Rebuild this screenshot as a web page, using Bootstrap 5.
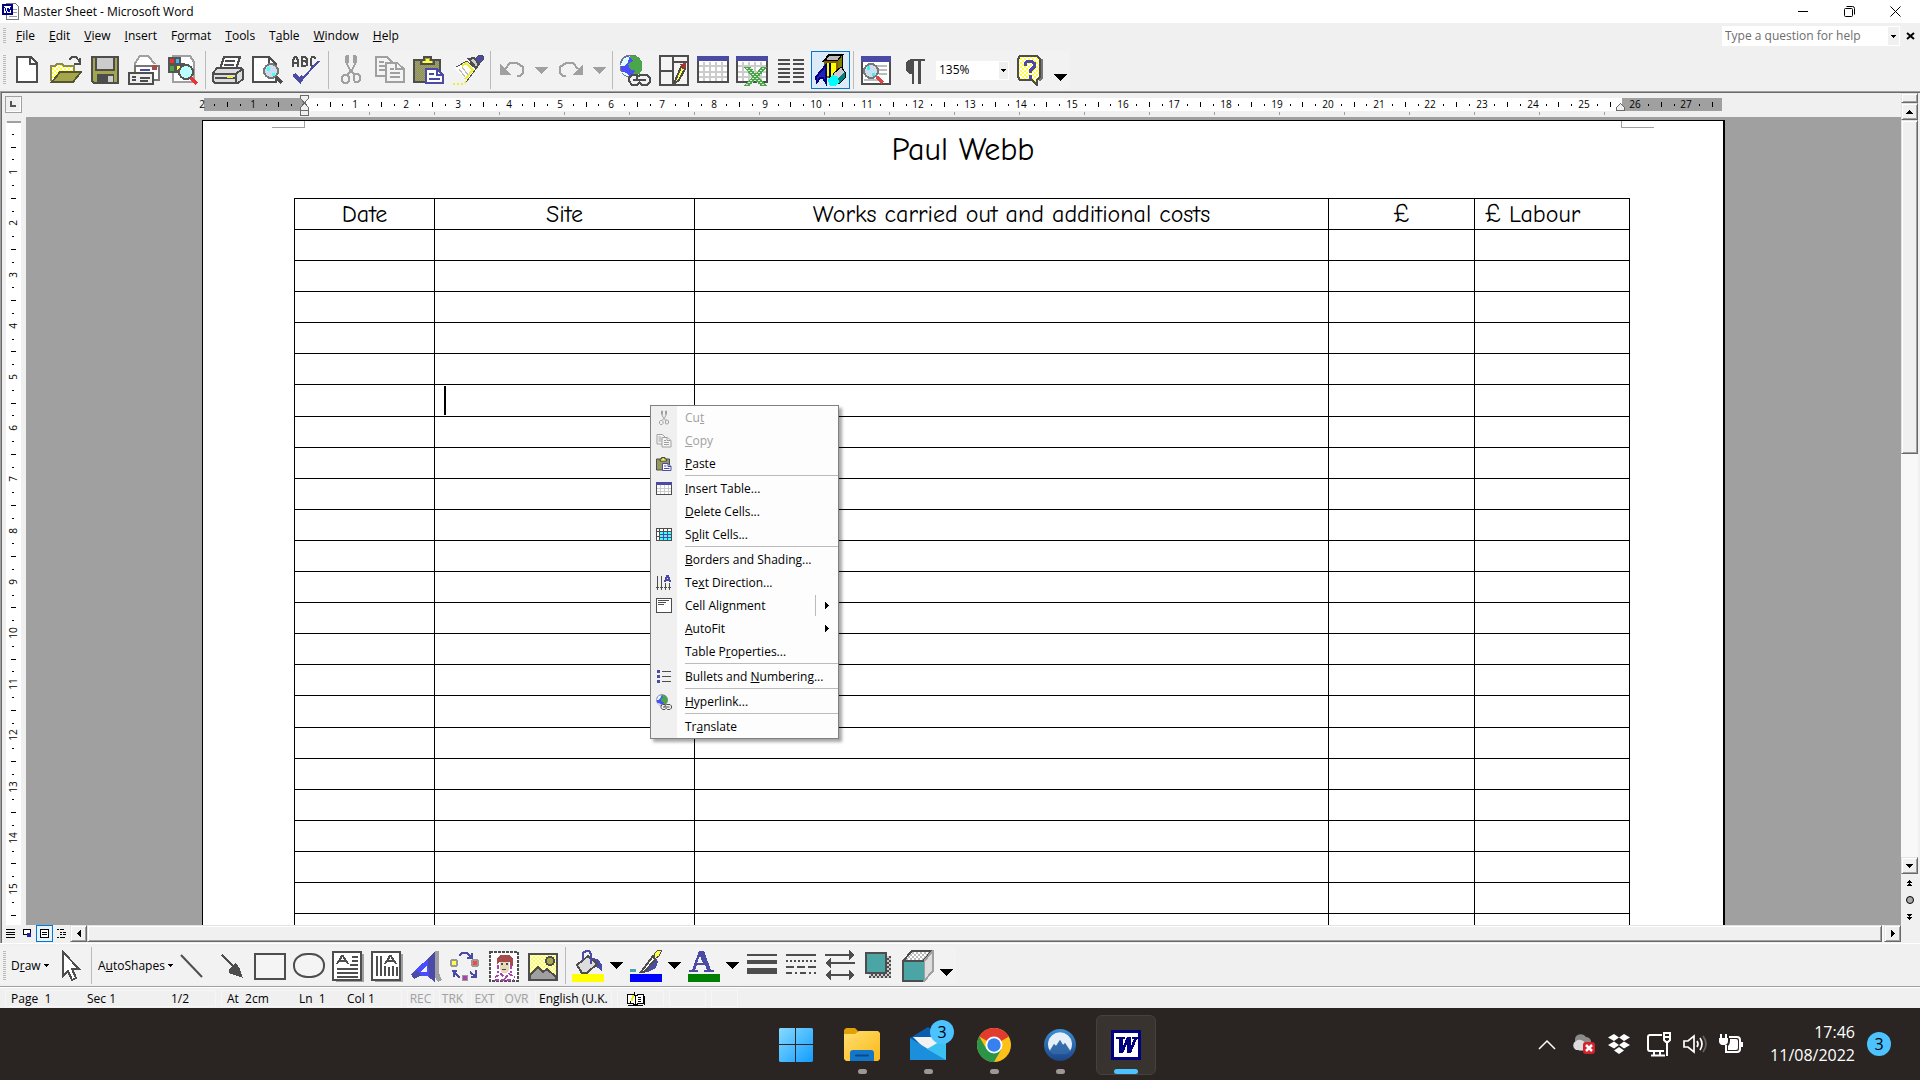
<!DOCTYPE html>
<html lang="en">
<head>
<meta charset="utf-8">
<meta name="viewport" content="width=device-width, initial-scale=1">
<title>Master Sheet - Microsoft Word</title>
<link href="https://cdn.jsdelivr.net/npm/bootstrap@5.3.0/dist/css/bootstrap.min.css" rel="stylesheet">
<style>
:root{--face:#f0f0f0;--mid:#a0a0a0;--dark:#696969;--ink:#4d4d4d;--blue:#4b4ba5}
body{font-family:"Segoe UI","Open Sans",sans-serif;font-size:12px;line-height:16px;color:#000;background:var(--face);overflow:hidden}
button{border:0;background:none;padding:0;color:inherit;font:inherit;line-height:inherit}
svg{display:block;flex:none}
.px{shape-rendering:crispEdges}
.titlebar{height:23px;background:#fff;padding-left:2px;padding-right:2px}
.titlebar .caption{width:46px;height:20px;display:grid;place-items:center}
.menubar{height:26px}
.menubar .entry{padding:0 7px;color:#000;text-decoration:none}
.grip{width:3px;background:repeating-linear-gradient(#bbb 0 1px,var(--face) 1px 2px);margin:0 1px 0 3px}
.menubar .grip{height:16px;margin-right:3px}
.ask{width:178px;height:20px;background:#fff;padding:1px}
.ask input{border:0;outline:0;background:none;padding:0 2px;min-width:0;color:#6d6d6d}
.ask input::placeholder{color:#6d6d6d;opacity:1}
.ask button{width:11px;background:var(--face);display:grid;place-items:center}
.doc-close{width:20px;display:grid;place-items:center}
.toolrow{height:42px;padding:2px 0}
.drawrow{height:43px;padding:3px 0 2px;border-top:1px solid #fff}
.strip{background:#f2f2f2;border-radius:2px}
.tool{width:39px;display:grid;place-items:center;flex:none}
.tool.pressed{border:1px solid #0078d7;background:#dcebf7;margin-left:1px}
.drop{width:19px;display:grid;place-items:center;flex:none}
.word-btn{display:flex;align-items:center;gap:3px;padding:0 0 0 4px}
.btn-draw{width:45px}
.btn-shapes{width:78px}
.rule{width:1px;background:#bbb;margin:0 2px 0 3px;flex:none}
.zoombox{position:relative;width:73px;height:19px;background:#fff;margin:0 3px 0 2px}
.zoombox select{appearance:none;border:1px solid #fff;border-right-width:2px;background:#fff;width:100%;height:19px;padding:0 0 0 2px;font-size:12px;line-height:16px;color:#000;border-radius:0}
.zoombox .knob{position:absolute;right:1px;top:1px;width:9px;height:17px;background:var(--face);display:grid;place-items:center;pointer-events:none}
.desk{flex:1 1 0;border-top:1px solid var(--mid);border-left:1px solid var(--mid);min-height:0}
.desk-inner{border-top:1px solid var(--dark);border-left:1px solid var(--dark);min-height:0;min-width:0}
.hrule{height:24px}
.tabstop{width:17px;height:17px;border:1px solid var(--mid);margin:3px 4px 0 3px;display:grid;place-items:center;box-shadow:inset -1px -1px #fff}
.vrule{width:24px;overflow:hidden}
.work{background:var(--mid);padding-top:3px;overflow:hidden;min-height:0}
.sheet{position:relative;width:1523px;height:1100px;background:#fff;border:1px solid #000;border-right-width:2px;flex:none}
.crop-mark{position:absolute;top:0;width:33px;height:7px;border-bottom:1px solid var(--mid)}
.crop-mark.start{left:69px;border-right:1px solid var(--mid)}
.crop-mark.end{right:69px;border-left:1px solid var(--mid)}
.hand{font-family:"Comic Sans MS","Comic Neue",Lato,sans-serif;font-weight:400}
.sheet h1{font-size:32px;line-height:40px;margin:0;padding:9px 0 28px}
.log{width:1335px;margin-left:91px;border-collapse:collapse;table-layout:fixed;font-size:24px;line-height:28px}
.log th,.log td{border:1px solid #000;padding:0 10px;height:31px;font-weight:400;text-align:center}
.log th:last-child{text-align:left}
.log tr:nth-child(10n+6) td{height:32px}
.log td{position:relative}
.caret{position:absolute;left:9px;top:1px;width:2px;height:29px;background:#000}
.bevel{background:var(--face);border:1px solid;border-color:#e3e3e3 var(--dark) var(--dark) #e3e3e3;box-shadow:inset 1px 1px #fff,inset -1px -1px var(--mid);display:grid;place-items:center;flex:none}
.track{background:#f8f8f8}
.vbar{width:17px;margin-right:2px;padding-bottom:18px}
.vbar .bevel{width:17px}
.hbar{height:17px;margin-bottom:1px}
.view{width:17px;height:17px;display:grid;place-items:center}
.view.pressed{border:1px solid #0078d7;background:#e5f1fb}
.ctx{position:absolute;left:447px;top:284px;width:189px;border:1px solid #808080;background:linear-gradient(90deg,var(--face) 26px,#fdfdfd 26px);box-shadow:3px 3px 3px rgba(0,0,0,.35);z-index:2}
.ctx button{display:flex;align-items:center;width:100%;height:23px;text-align:left}
.ctx .pic{width:26px;display:grid;place-items:center;flex:none;margin-right:8px}
.ctx .off{color:var(--mid)}
.ctx hr{margin:0 0 1px 34px;border:0;height:1px;background:#bbb;opacity:1}
.ctx .more{margin-left:auto;width:23px;height:21px;display:grid;place-items:center}
.ctx .split{border-left:1px solid #bbb}
.status{height:22px;border-top:1px solid var(--mid);box-shadow:inset 0 1px #fff;padding:3px 0 1px 5px;gap:5px;font-family:Tahoma,"Open Sans",sans-serif}
.pane{border:1px solid #f6f6f6;display:flex;align-items:center;padding-left:5px;white-space:nowrap}
.pane-page{width:211px}.pane-at{width:181px}.pane-flag{width:27px;padding:0;justify-content:center;color:var(--mid)}
.pane-lang{width:77px;padding-left:3px}.pane-book{width:47px}.pane-a{width:37px}.pane-b{width:27px}
.c76{width:76px}.c84{width:84px}.c72{width:72px}.c48{width:48px}
.taskbar{height:72px;background:#2a2522;display:grid;grid-template-columns:1fr auto 1fr;color:#fff}
.dock{padding-left:2px}
.app{width:66px;height:72px;padding-top:2px;position:relative;display:grid;place-items:center}
.app::after{content:"";position:absolute;bottom:6px;left:29px;width:9px;height:5px;border-radius:3px;background:#9b9896}
.app.start::after{display:none}
.app.active::before{content:"";position:absolute;left:3px;top:7px;width:60px;height:60px;border-radius:6px;background:#38332f;border:1px solid #46413d}
.app.active::after{left:21px;width:24px;background:#4cc2ff}
.app svg{position:relative}
.count{width:24px;height:24px;border-radius:50%;background:#4cc2ff;color:#000;font-size:16px;line-height:24px;text-align:center}
.app .count{position:absolute;left:35px;top:12px}
.trayicon{width:36px;display:grid;place-items:center}
.clock{width:86px;font-size:16px;line-height:23px;text-align:right;white-space:nowrap;display:flex;flex-direction:column;align-items:flex-end}
</style>
</head>
<body class="d-flex flex-column vh-100">

<svg width="0" height="0" class="position-absolute" aria-hidden="true">
<defs>
<pattern id="chk-y" width="4" height="4" patternUnits="userSpaceOnUse"><path fill="#fff" d="M0 0h4v4H0z"/><path fill="#ff4" d="M0 0h2v2H0zM2 2h2v2H2z"/></pattern>
<pattern id="chk-o" width="2" height="2" patternUnits="userSpaceOnUse"><path fill="#a5a54b" d="M0 0h2v2H0z"/><path fill="#8a8a78" d="M0 0h1v1H0zM1 1h1v1H1z"/></pattern>
<pattern id="chk-g" width="4" height="4" patternUnits="userSpaceOnUse"><path fill="#fff" d="M0 0h4v4H0z"/><path fill="#bbb" d="M0 0h2v2H0zM2 2h2v2H2z"/></pattern>
<pattern id="chk-k" width="4" height="4" patternUnits="userSpaceOnUse"><path fill="#ccc" d="M0 0h4v4H0z"/><path fill="#4d4d4d" d="M0 0h2v2H0zM2 2h2v2H2z"/></pattern>
<pattern id="chk-e" width="4" height="4" patternUnits="userSpaceOnUse"><path fill="#4ba54b" d="M0 0h4v4H0z"/><path fill="#d5ecd5" d="M0 0h2v1H0zM2 2h2v1H2z"/></pattern>
</defs>
<symbol id="cut" viewBox="0 0 32 32"><g fill="none" stroke="#a0a0a0" stroke-width="2"><path d="M11 2v6l4 8 5 5M21 2v6l-4 8-5 5M11 2h2v7M21 2h-2v7"/><path d="M9 21h3l2 2v4l-2 2H9l-2-2v-4zM20 20h3l2 2v4l-2 2h-3l-1-2v-4z"/></g></symbol>
<symbol id="copy" viewBox="0 0 32 32"><g fill="#f4f4f4" stroke="#a0a0a0" stroke-width="2"><path d="M2 3h11l5 5v14H2z"/><path d="M5 8h5M5 12h8M5 16h6"/><path d="M12 9h11l7 6v13H12z"/><path d="M22 9v6h7M16 15h4M16 19h10M16 23h10"/></g></symbol>
<symbol id="paste" viewBox="0 0 32 32"><path fill="url(#chk-o)" stroke="#4d4d4d" stroke-width="2" d="M1 6h26v22H1z"/><path fill="#a5a54b" stroke="#4d4d4d" stroke-width="2" d="M8 10V6h3V3h7v3h3v4z"/><path fill="#ff4" d="M10 9h9V7h-3V5h-3v2h-3z"/><path fill="#fff" stroke="#4b4ba5" stroke-width="2" d="M13 15h11l6 6v8H13z"/><path fill="none" stroke="#4b4ba5" stroke-width="2" d="M24 15v6h6M16 20h5M16 25h11"/></symbol>
<symbol id="grid" viewBox="0 0 32 32"><path fill="#fff" stroke="#4d4d4d" stroke-width="2" d="M1 3h30v25H1z"/><path fill="#4b4ba5" d="M0 2h32v5H0z"/><path fill="none" stroke="#ccc" stroke-width="2" d="M7 8v19M13 8v19M19 8v19M25 8v19M2 12h28M2 18h28M2 23h28"/></symbol>
<symbol id="globe" viewBox="0 0 32 32"><circle cx="12" cy="12" r="11" fill="#4b4bff" stroke="#777"/><path fill="#4ba54b" d="M10 2h7l6 6v8l-4 6h-6l3-5-5-2-2-5 5-3z"/><path fill="#dff" d="M5 4l6-2-2 6-4 4-4 0zM3 18l5 1 3 4-6-2z"/><path fill="#f2f2f2" d="M11 21l2-1h15l3 3v6l-3 2H13l-3-3z"/><path fill="none" stroke="#4d4d4d" stroke-width="2" d="M19 21h-6l-3 3v3l3 4h5l3-3M18 26v-3l3-2h7l3 3v4l-3 3h-5l-2-2M14 26h13"/></symbol>
<symbol id="dn" viewBox="0 0 13 7"><path d="M0 0h13v1h-1v1h-1v1h-1v1H9v1H8v1H7v1H6V6H5V5H4V4H3V3H2V2H1V1H0z"/></symbol>
<symbol id="tiny" viewBox="0 0 5 3"><path d="M0 0h5v1H4v1H3v1H2V2H1V1H0z"/></symbol>
</svg>

<header class="titlebar d-flex align-items-center flex-shrink-0">
  <svg class="px me-1" width="17" height="17"><path fill="#fff" stroke="#777" d="M4.500 .5h9l3 3v13h-12z"/><path stroke="#999" d="M11 6.500h4M11 9.500h4M7 13.500h8"/><path fill="#fff" stroke="#00007f" stroke-width="2" d="M1 2h9v9H1z"/><path fill="none" stroke="#0000a0" stroke-width="1" d="M2.500 4l2 5 1.500-4 1 4 2-5"/></svg>
  <span>Master Sheet - Microsoft Word</span>
  <div class="d-flex ms-auto">
    <button class="caption" aria-label="Minimize"><svg class="px" width="10" height="10"><path d="M0 4h10v1H0z"/></svg></button>
    <button class="caption" aria-label="Restore"><svg width="11" height="11" fill="none" stroke="#000"><rect x=".5" y="2.500" width="8" height="8" rx="1"/><path d="M2.500 .5h6a2 2 0 0 1 2 2v6"/></svg></button>
    <button class="caption" aria-label="Close"><svg width="11" height="11" stroke="#000"><path d="M.5 .5l10 10M10.500 .5l-10 10"/></svg></button>
  </div>
</header>

<nav class="menubar d-flex align-items-center flex-shrink-0">
  <span class="grip"></span>
  <a class="entry" href="#"><u>F</u>ile</a><a class="entry" href="#"><u>E</u>dit</a><a class="entry" href="#"><u>V</u>iew</a><a class="entry" href="#"><u>I</u>nsert</a><a class="entry" href="#">F<u>o</u>rmat</a><a class="entry" href="#"><u>T</u>ools</a><a class="entry" href="#">T<u>a</u>ble</a><a class="entry" href="#"><u>W</u>indow</a><a class="entry" href="#"><u>H</u>elp</a>
  <div class="ask d-flex ms-auto"><input class="flex-grow-1" type="text" aria-label="Help search" placeholder="Type a question for help"><button aria-label="Recent questions"><svg class="px" width="5" height="3"><use href="#tiny"/></svg></button></div>
  <button class="doc-close" aria-label="Close document"><svg width="9" height="8" stroke="#000" stroke-width="2"><path d="M1 1l7 6M8 1L1 7"/></svg></button>
</nav>

<div class="toolrow d-flex flex-shrink-0">
 <div class="strip d-flex">
  <span class="grip my-1"></span>
  <button class="tool" aria-label="New"><svg class="px" width="32" height="32"><path fill="#fff" stroke="#4d4d4d" stroke-width="2" d="M6 3h14l6 6v19H6z"/><path fill="none" stroke="#4d4d4d" stroke-width="2" d="M19 3v7h7"/></svg></button>
  <button class="tool" aria-label="Open"><svg class="px" width="32" height="32"><path fill="none" stroke="#4d4d4d" stroke-width="2" d="M19 6l3-3h4l4 5M30 4v6h-6"/><path fill="url(#chk-y)" stroke="#8a8a50" stroke-width="2" d="M1 27V12h4l2-2h5l2 2h10v6"/><path fill="#a5a54b" stroke="#55552d" stroke-width="2" d="M2 28l8-10h21l-8 10z"/></svg></button>
  <button class="tool" aria-label="Save"><svg class="px" width="32" height="32"><path fill="#a5a54b" stroke="#4d4d4d" stroke-width="2" d="M3 3h26v26H5l-2-2z"/><path fill="#ccc" stroke="#4d4d4d" stroke-width="2" d="M7 3h18v13H7z"/><path fill="#4d4d4d" d="M8 20h17v9H8z"/><path fill="#ccc" d="M19 22h5v6h-5z"/></svg></button>
  <button class="tool" aria-label="E-mail"><svg class="px" width="32" height="32"><path fill="#fff" stroke="#a0a0a0" stroke-width="2" d="M7 15V9l5-7h8l7 8"/><path fill="#fff" stroke="#777" stroke-width="2" d="M7 12h24v14H7z"/><path fill="#a54b4b" d="M24 11h5v5h-5z"/><path stroke="#4b4ba5" stroke-width="2" d="M12 16h10"/><path fill="#eee" stroke="#4d4d4d" stroke-width="2" d="M1 19h24v11H1z"/><path stroke="#4d4d4d" stroke-width="2" d="M4 23h4M4 26h4M12 24h10M12 27h8"/></svg></button>
  <button class="tool" aria-label="File search"><svg class="px" width="32" height="32"><path fill="#fff" stroke="#a0a0a0" stroke-width="2" d="M6 2h17l4 6v20H6z"/><path fill="#555" d="M1 3h13v6h4v10H1z"/><path fill="#e33" d="M3 5h4v4H3z"/><path fill="#4bf" d="M9 5h3v4H9z"/><path fill="#4ba54b" d="M3 12h4v5H3z"/><path fill="#ff4" d="M10 12h3v4h-3z"/><circle cx="19" cy="18" r="7" fill="#bff" stroke="#555" stroke-width="2"/><path d="M24 24l6 6" stroke="#e33" stroke-width="4"/></svg></button>
  <span class="rule"></span>
  <button class="tool" aria-label="Print"><svg class="px" width="32" height="32"><path fill="#fff" stroke="#4d4d4d" stroke-width="2" d="M8 15l4-12h16l-4 12"/><path stroke="#4d4d4d" stroke-width="2" d="M13 7h10M12 11h10"/><path fill="#ddd" stroke="#4d4d4d" stroke-width="2" d="M5 14h24l2 2v9l-5 4H3l-2-2v-8z"/><path fill="none" stroke="#4d4d4d" stroke-width="2" d="M1 20h23l6-5M24 20v9M3 24h20"/><path stroke="#ee4" stroke-width="2" d="M15 23h6"/></svg></button>
  <button class="tool" aria-label="Print preview"><svg class="px" width="32" height="32"><path fill="#fff" stroke="#4d4d4d" stroke-width="2" d="M2 3h16l7 7v18H2z"/><path fill="none" stroke="#4d4d4d" stroke-width="2" d="M18 3v7h7"/><circle cx="20" cy="17" r="7" fill="#cde" stroke="#777" stroke-width="2"/><path fill="#4ff" d="M16 13h3v4h-3zM21 19h3v3h-3z"/><path d="M25 23l6 6" stroke="#4d4d4d" stroke-width="4"/></svg></button>
  <button class="tool" aria-label="Spelling"><svg class="px" width="32" height="32"><path fill="none" stroke="#4d4d4d" stroke-width="2" d="M3 13V6l2-3h1l2 3v7M3 9h5M12 13V3h3l2 2v2h-5M15 8h2v3l-2 1h-3M26 5l-2-2h-2l-1 2v6l1 1h2l2-1"/><path fill="none" stroke="#4b4ba5" stroke-width="4" d="M4 20l6 7 3-5"/><path stroke="#4b4ba5" stroke-width="2" fill="none" d="M11 26L29 7"/></svg></button>
  <span class="rule"></span>
  <button class="tool" aria-label="Cut" disabled><svg class="px" width="32" height="32"><use href="#cut"/></svg></button>
  <button class="tool" aria-label="Copy" disabled><svg class="px" width="32" height="32"><use href="#copy"/></svg></button>
  <button class="tool" aria-label="Paste"><svg class="px" width="32" height="32"><use href="#paste"/></svg></button>
  <button class="tool" aria-label="Format painter"><svg class="px" width="32" height="32"><path fill="#4b4ba5" stroke="#4d4d4d" d="M23 5l4-4 4 1v4l-5 5z"/><path fill="#ccc" stroke="#4d4d4d" stroke-width="2" d="M17 5l5-1 5 6-3 4z"/><path fill="#fff" d="M14 8l10 8-9 11L3 14z"/><path fill="none" stroke="#4d4d4d" stroke-width="1" d="M4 13L15 7l9 8-10 13"/><path fill="none" stroke="#bbb" d="M7 15l6 8M10 13l6 8"/><path fill="none" stroke="#ee3" stroke-width="2" d="M14 9l7 7-8 9M14 9l-4 3"/><path fill="none" stroke="#ee3" stroke-dasharray="2 2" stroke-width="2" d="M1 30h10l3-2"/></svg></button>
  <span class="rule"></span>
  <button class="tool" aria-label="Undo" disabled><svg class="px" width="32" height="32"><path fill="#a0a0a0" d="M3 10v11h11z"/><path fill="none" stroke="#a0a0a0" stroke-width="2" d="M8 15l5-6h7l6 4v6l-3 3h-3"/></svg></button>
  <button class="drop" aria-label="Undo list" disabled><svg class="px" width="13" height="7" fill="#a0a0a0"><use href="#dn"/></svg></button>
  <button class="tool" aria-label="Redo" disabled><svg class="px" width="32" height="32"><path fill="#a0a0a0" d="M28 10v11H17z"/><path fill="none" stroke="#a0a0a0" stroke-width="2" d="M23 15l-5-6h-7l-6 4v6l3 3h3"/></svg></button>
  <button class="drop" aria-label="Redo list" disabled><svg class="px" width="13" height="7" fill="#a0a0a0"><use href="#dn"/></svg></button>
  <span class="rule"></span>
  <button class="tool" aria-label="Insert hyperlink"><svg class="px" width="32" height="32"><use href="#globe"/></svg></button>
  <button class="tool" aria-label="Tables and borders"><svg class="px" width="32" height="32"><path fill="#f4f4f4" stroke="#4d4d4d" stroke-width="2" d="M2 2h28v29H2zM15 2v29M2 17h13M15 8h15"/><path fill="#ff4" stroke="#4d4d4d" stroke-width="2" d="M17 27l6-14 4 2-6 11-4 3z"/><path fill="#a33" d="M22 10l6-1v5l-2 1z"/></svg></button>
  <button class="tool" aria-label="Insert table"><svg class="px" width="32" height="32"><use href="#grid"/></svg></button>
  <button class="tool" aria-label="Insert worksheet"><svg class="px" width="32" height="32"><use href="#grid"/><path fill="url(#chk-e)" d="M8 13h7l5 7 5-7h6l-8 10 8 9h-7l-5-6-5 6H7l9-9z"/></svg></button>
  <button class="tool" aria-label="Columns"><svg class="px" width="32" height="32"><path stroke="#4d4d4d" stroke-width="2" d="M3 6h12M3 10h12M3 15h12M3 19h12M3 23h12M3 28h12M18 6h11M18 10h11M18 15h11M18 19h11M18 23h11M18 28h11"/></svg></button>
  <button class="tool pressed" aria-label="Drawing"><svg class="px" width="32" height="32"><path fill="#bbb" stroke="#000" stroke-width="2" d="M9 7l5-6h13l-4 6z"/><path fill="#808000" stroke="#000" d="M22 7l5-6v16l-5 6z"/><path fill="#ff0" stroke="#806000" stroke-width="2" d="M10 8h12v15H10z"/><path stroke="#000" stroke-width="2" d="M15 9v15"/><path fill="#22b" stroke="#000080" stroke-width="2" d="M1 23l10-12v18l-3-5H5l-3 4z"/><path fill="#ccc" stroke="#000" d="M18 20l8-7 4 5v6l-6 6z"/><path fill="#008080" d="M23 24l7-6v5l-6 7z"/><path fill="#0ff" d="M13 26l4-5 6 2 1 6-4 3h-5z"/></svg></button>
  <span class="rule"></span>
  <button class="tool" aria-label="Document map"><svg class="px" width="32" height="32"><path fill="#fff" stroke="#4d4d4d" stroke-width="2" d="M2 3h28v27H2z"/><path fill="#4b4ba5" d="M1 2h30v6H1z"/><path stroke="#bbb" stroke-width="2" d="M15 12h12M19 16h8M19 20h8M4 26h16"/><circle cx="11" cy="17" r="7" fill="#cde" stroke="#777" stroke-width="2"/><path fill="#4ee" d="M7 12h3v4H7zM12 19h3v3h-3z"/><path d="M17 23l6 6" stroke="#d44" stroke-width="4"/></svg></button>
  <button class="tool" aria-label="Show formatting marks"><svg class="px" width="32" height="32"><path fill="#4d4d4d" d="M12 5h14v2h-4v23h-3V7h-4v23h-2V20h-3l-3-3V9l2-3z"/></svg></button>
  <div class="zoombox align-self-center"><select aria-label="Zoom"><option>135%</option></select><span class="knob"><svg class="px" width="5" height="3"><use href="#tiny"/></svg></span></div>
  <button class="tool" aria-label="Help"><svg class="px" width="32" height="32"><path fill="url(#chk-y)" stroke="#4d4d4d" stroke-width="2" d="M4 2h17l3 3v18l-3 3v5l-5-5H4l-2-3V5z"/><path stroke="#777" stroke-width="2" fill="none" d="M26 5v19l-3 3"/><path fill="none" stroke="#4b4ba5" stroke-width="3" d="M9 12V9l3-2h3l3 2v4l-4 4v2M14 21v4"/></svg></button>
  <button class="drop align-items-end pb-1" aria-label="Toolbar options"><svg class="px mb-1" width="13" height="7"><use href="#dn"/></svg></button>
 </div>
</div>

<main class="desk d-flex">
 <div class="desk-inner d-flex flex-grow-1">
  <div class="d-flex flex-column flex-grow-1" style="min-width:0">
   <div class="hrule d-flex flex-shrink-0">
    <button class="tabstop" aria-label="Tab stop type"><svg class="px" width="7" height="7"><path fill="#555" d="M0 0h2v4h4v2H0z"/></svg></button>
    <div class="flex-grow-1 d-flex justify-content-center"><svg id="hruler" class="px overflow-visible" width="1523" height="24" font-family="Tahoma,'Open Sans',sans-serif" font-size="10" text-anchor="middle"></svg></div>
   </div>
   <div class="d-flex flex-grow-1" style="min-height:0">
    <div class="vrule"><svg id="vruler" class="px" width="24" height="808" font-family="Tahoma,'Open Sans',sans-serif" font-size="10" text-anchor="middle"></svg></div>
    <div class="work flex-grow-1 d-flex justify-content-center">
     <article class="sheet">
      <span class="crop-mark start"></span><span class="crop-mark end"></span>
      <h1 class="hand text-center">Paul Webb</h1>
      <table class="log hand">
       <colgroup><col style="width:140px"><col style="width:260px"><col style="width:634px"><col style="width:146px"><col style="width:155px"></colgroup>
       <thead><tr><th scope="col">Date</th><th scope="col">Site</th><th scope="col">Works carried out and additional costs</th><th scope="col">£</th><th scope="col">£ Labour</th></tr></thead>
       <tbody id="rows"></tbody>
      </table>
      <div class="ctx" role="menu">
       <button class="off" disabled><span class="pic"><svg width="16" height="16"><use href="#cut"/></svg></span><span>Cu<u>t</u></span></button>
       <button class="off" disabled><span class="pic"><svg width="16" height="16"><use href="#copy"/></svg></span><span><u>C</u>opy</span></button>
       <button><span class="pic"><svg width="16" height="16"><use href="#paste"/></svg></span><span><u>P</u>aste</span></button>
       <hr>
       <button><span class="pic"><svg class="px" width="16" height="14"><path fill="#fff" stroke="#4d4d4d" d="M.5 .5h15v12H.5z"/><path fill="#4b4ba5" d="M0 0h16v3H0z"/><path stroke="#ccc" d="M4.500 3v9M8.500 3v9M12.500 3v9M1 6.500h14M1 9.500h14"/></svg></span><span><u>I</u>nsert Table...</span></button>
       <button><span class="pic"></span><span><u>D</u>elete Cells...</span></button>
       <button><span class="pic"><svg class="px" width="16" height="14"><path fill="#fff" stroke="#4d4d4d" d="M.5 .5h15v12H.5z"/><path fill="#4ff" d="M4 4h11v8H4z"/><path stroke="#4d4d4d" d="M3.500 1v12M0 3.500h16M7.500 1v3M11.500 1v3M0 8.500h3"/><path stroke="#4b4ba5" d="M7.500 4v8M11.500 4v8M4 6.500h11M4 9.500h11"/></svg></span><span>S<u>p</u>lit Cells...</span></button>
       <hr>
       <button><span class="pic"></span><span><u>B</u>orders and Shading...</span></button>
       <button><span class="pic"><svg class="px" width="16" height="16"><path stroke="#4d4d4d" d="M1.500 1v14M5.500 1v14M9.500 8v7M13.500 8v7M0 12.500h3M4 12.500h3M8 12.500h3M12 12.500h3"/><path fill="none" stroke="#4b4ba5" stroke-width="2" d="M9 7l2-6h1l2 6M10 5h4"/></svg></span><span>Te<u>x</u>t Direction...</span></button>
       <button><span class="pic"><svg class="px" width="16" height="15"><path fill="#fff" stroke="#4d4d4d" d="M.5 .5h15v14H.5z"/><path stroke="#4d4d4d" d="M2 2.500h11M2 4.500h8M2 6.500h6"/></svg></span><span>Cell Ali<u>g</u>nment</span><span class="more split"><svg class="px" width="4" height="7"><path d="M0 0h1v1h1v1h1v1h1v1H3v1H2v1H1v1H0z"/></svg></span></button>
       <button><span class="pic"></span><span><u>A</u>utoFit</span><span class="more"><svg class="px" width="4" height="7"><path d="M0 0h1v1h1v1h1v1h1v1H3v1H2v1H1v1H0z"/></svg></span></button>
       <button><span class="pic"></span><span>Table P<u>r</u>operties...</span></button>
       <hr>
       <button><span class="pic"><svg class="px" width="16" height="14"><path fill="#4b4ba5" d="M1 0h3v3H1zM1 5h3v3H1zM1 10h3v3H1z"/><path stroke="#4d4d4d" d="M6 1.500h9M6 6.500h9M6 11.500h9"/></svg></span><span>Bullets and <u>N</u>umbering...</span></button>
       <hr>
       <button><span class="pic"><svg width="16" height="16"><use href="#globe"/></svg></span><span><u>H</u>yperlink...</span></button>
       <hr>
       <button><span class="pic"></span><span>Tr<u>a</u>nslate</span></button>
      </div>
     </article>
    </div>
   </div>
   <div class="hbar d-flex flex-shrink-0">
    <button class="view" aria-label="Normal view"><svg class="px" width="9" height="9"><path d="M0 0h9v1H0zM0 3h9v1H0zM0 5h9v1H0zM0 8h9v1H0z"/></svg></button>
    <button class="view" aria-label="Web layout view"><svg class="px" width="9" height="9"><path fill="#fff" stroke="#000" d="M.5 .5h7v5h-7z"/><circle cx="6" cy="6" r="2.500" fill="#22a"/></svg></button>
    <button class="view pressed" aria-label="Print layout view"><svg class="px" width="9" height="9"><path fill="#fff" stroke="#000" d="M.5 .5h8v8h-8z"/><path d="M2 3h5v1H2zM2 5h5v1H2z"/></svg></button>
    <button class="view" aria-label="Outline view"><svg class="px" width="9" height="9"><path d="M0 0h2v1H0zM3 0h4v1H3zM3 3h2v1H3zM6 3h3v1H6zM3 5h2v1H3zM6 5h3v1H6zM0 8h2v1H0zM3 8h5v1H3z"/></svg></button>
    <button class="bevel" style="width:17px" aria-label="Scroll left"><svg class="px" width="4" height="7"><path d="M4 0v7H3V6H2V5H1V4H0V3h1V2h1V1h1V0z"/></svg></button>
    <div class="bevel flex-grow-1"></div>
    <div class="track" style="width:2px"></div>
    <button class="bevel" style="width:17px" aria-label="Scroll right"><svg class="px" width="4" height="7"><path d="M0 0h1v1h1v1h1v1h1v1H3v1H2v1H1v1H0z"/></svg></button>
   </div>
  </div>
  <div class="vbar d-flex flex-column">
   <div class="bevel" style="height:10px"></div>
   <button class="bevel" style="height:17px" aria-label="Scroll up"><svg class="px" width="7" height="4"><path d="M3 0h1v1h1v1h1v1h1v1H0V3h1V2h1V1h1z"/></svg></button>
   <div class="track flex-grow-1"><div class="bevel" style="height:334px"></div></div>
   <button class="bevel" style="height:17px" aria-label="Scroll down"><svg class="px" width="7" height="4"><path d="M0 0h7v1H6v1H5v1H4v1H3V3H2V2H1V1H0z"/></svg></button>
   <button class="view" aria-label="Previous page"><svg class="px" width="5" height="6"><path d="M2 0h1v1h1v1h1v1H3v1h1v1h1v1H0V5h1V4h1V3H0V2h1V1h1z"/></svg></button>
   <button class="view" aria-label="Browse object"><svg width="8" height="8"><circle cx="4" cy="4" r="3.500" fill="#aaa" stroke="#000"/></svg></button>
   <button class="view" aria-label="Next page"><svg class="px" width="5" height="6"><path d="M0 0h5v1H4v1H3v1h2v1H4v1H3v1H2V5H1V4H0V3h2V2H1V1H0z"/></svg></button>
  </div>
 </div>
</main>

<div class="drawrow d-flex flex-shrink-0">
 <div class="strip d-flex">
  <span class="grip my-1"></span>
  <button class="word-btn btn-draw"><span>D<u>r</u>aw</span><svg class="px" width="5" height="3"><use href="#tiny"/></svg></button>
  <button class="tool" aria-label="Select objects"><svg class="px" width="32" height="32"><path fill="#fff" stroke="#4d4d4d" stroke-width="2" d="M7 2v24l5-5 4 9 4-2-4-9h7z"/></svg></button>
  <span class="rule ms-0"></span>
  <button class="word-btn btn-shapes"><span>A<u>u</u>toShapes</span><svg class="px" width="5" height="3"><use href="#tiny"/></svg></button>
  <button class="tool" aria-label="Line"><svg width="32" height="32"><path stroke="#4d4d4d" stroke-width="2" d="M5 5l21 22"/></svg></button>
  <button class="tool" aria-label="Arrow"><svg class="px" width="32" height="32"><path stroke="#4d4d4d" stroke-width="2" d="M7 5l14 14"/><path fill="#4d4d4d" d="M14 19l7-6 4 6 3 9-9-3-5-2z"/></svg></button>
  <button class="tool" aria-label="Rectangle"><svg class="px" width="32" height="32"><path fill="#f4f4f4" stroke="#4d4d4d" stroke-width="2" d="M1 4h30v25H1z"/></svg></button>
  <button class="tool" aria-label="Oval"><svg width="32" height="32"><rect x="1" y="4" width="30" height="23" rx="13" ry="11" fill="#f4f4f4" stroke="#4d4d4d" stroke-width="2"/></svg></button>
  <button class="tool" aria-label="Text box"><svg class="px" width="32" height="32"><path fill="#a0a0a0" d="M4 4h28v28H4z"/><path fill="#fff" stroke="#4d4d4d" stroke-width="2" d="M1 2h28v28H1z"/><path fill="none" stroke="#4d4d4d" stroke-width="2" d="M5 14l5-8h1l5 8M8 11h6M20 7h6M20 11h6M18 15h8M5 19h21M5 23h21M5 27h21"/></svg></button>
  <button class="tool" aria-label="Vertical text box"><svg class="px" width="32" height="32"><path fill="#a0a0a0" d="M4 4h28v28H4z"/><path fill="#fff" stroke="#4d4d4d" stroke-width="2" d="M1 2h28v28H1z"/><path fill="none" stroke="#4d4d4d" stroke-width="2" d="M6 6v20M10 6v20M14 16v10M18 17v9M22 16v10M26 17v9M14 14l5-8h1l5 8M17 11h6"/></svg></button>
  <button class="tool" aria-label="WordArt"><svg class="px" width="32" height="32"><path fill="#a0a0a0" d="M25 1h4v22l3 7-4 2-3-5z"/><path fill="#4b4bff" d="M1 24L25 2v30l-8-6H8l-4 3z"/><path fill="#4b4ba5" d="M18 8l7-6v30l-6-5zM1 24l6-3 5 4-8 4z"/><path fill="#f4f4f4" d="M10 22l7-6v6z"/></svg></button>
  <button class="tool" aria-label="Diagram"><svg class="px" width="32" height="32"><path fill="none" stroke="#4b4ba5" stroke-width="2" d="M10 6l3-3h5l4 4M23 3v5h-5M27 20v7h-5M27 27l-6-5M5 27v-7M3 21h5M5 22l6 6"/><circle cx="5" cy="13" r="3.500" fill="#ff4" stroke="#999" stroke-width="2"/><circle cx="26" cy="13" r="3.500" fill="#f44" stroke="#999" stroke-width="2"/><circle cx="16" cy="28" r="3" fill="#a4a" stroke="#999"/></svg></button>
  <button class="tool" aria-label="Clip art"><svg class="px" width="32" height="32"><path fill="#fff" stroke="#4d4d4d" stroke-width="2" stroke-dasharray="3 1" d="M2 2h28v29H2z"/><path fill="#a54b4b" d="M12 5h10l3 4v7h-3v-4H11l-2 3V9z"/><path fill="#e8d8b8" d="M12 12h9v8l-3 3h-4l-2-4z"/><path fill="#4d4d4d" d="M13 13h2v2h-2zM18 13h2v2h-2zM14 19h4v1h-4z"/><path fill="none" stroke="#a4a" stroke-width="2" stroke-dasharray="4 2" d="M10 15v8M23 15v8M7 27l6-3 4 4 4-4 6 3M7 30h19"/></svg></button>
  <button class="tool" aria-label="Picture"><svg class="px" width="32" height="32"><path fill="url(#chk-y)" stroke="#4d4d4d" stroke-width="2" d="M2 4h28v26H2z"/><circle cx="23" cy="11" r="4" fill="#a5a54b" stroke="#4d4d4d" stroke-width="2"/><path fill="#a0a0a0" stroke="#4d4d4d" stroke-width="2" d="M3 25l8-8 5 5 4-3 9 8v3H3z"/></svg></button>
  <span class="rule"></span>
  <button class="tool" aria-label="Fill color"><svg class="px" width="32" height="32"><path fill="#4b4ba5" d="M19 7l8 3 3 5v7l-4-4-6-5z"/><path fill="#ddd" stroke="#4d4d4d" stroke-width="2" d="M5 15L16 6l9 8-10 9h-5z"/><path fill="none" stroke="#4b4ba5" stroke-width="2" d="M11 11V3l3-2h3l2 3v10"/><path fill="#ff0" d="M0 24h32v8H0z"/></svg></button>
  <button class="drop" aria-label="Fill colors"><svg class="px" width="13" height="7"><use href="#dn"/></svg></button>
  <button class="tool" aria-label="Line color"><svg class="px" width="32" height="32"><path fill="#ff4" stroke="#4d4d4d" d="M24 4l4-4h4l-3 6-4 3z"/><path fill="#4b4ba5" d="M26 8l2 4-2 6-8 4h-8l5-6z"/><path fill="#fff" stroke="#4d4d4d" stroke-width="2" d="M23 6l2 4-11 12h-3z"/><path fill="#4ba5a5" d="M0 19h6v3H0z"/><path fill="#00f" d="M0 24h32v8H0z"/></svg></button>
  <button class="drop" aria-label="Line colors"><svg class="px" width="13" height="7"><use href="#dn"/></svg></button>
  <button class="tool" aria-label="Font color"><svg class="px" width="32" height="32"><path fill="#4b4ba5" fill-rule="evenodd" d="M11 1h5l7 19h3v2H16v-2h3l-2-5H9l-2 5h3v2H1v-2h3zM12 6l-3 7h6z"/><path fill="#008000" d="M0 24h32v8H0z"/></svg></button>
  <button class="drop" aria-label="Font colors"><svg class="px" width="13" height="7"><use href="#dn"/></svg></button>
  <button class="tool" aria-label="Line style"><svg class="px" width="32" height="32"><path fill="#4d4d4d" d="M1 4h30v2H1zM1 10h30v4H1zM1 18h30v6H1z"/></svg></button>
  <button class="tool" aria-label="Dash style"><svg class="px" width="32" height="32" stroke="#4d4d4d" stroke-width="2"><path d="M1 5h30"/><path d="M1 11h30" stroke-dasharray="2 2"/><path d="M1 17h30" stroke-dasharray="8 3"/><path d="M1 23h30" stroke-dasharray="6 3 2 3"/></svg></button>
  <button class="tool" aria-label="Arrow style"><svg class="px" width="32" height="32"><path stroke="#4d4d4d" stroke-width="2" d="M1 5h26M5 13h26M4 25h24"/><path fill="#4d4d4d" d="M25 0l6 5-6 5zM7 8l-6 5 6 5zM7 20l-6 5 6 5zM25 20l6 5-6 5z"/></svg></button>
  <button class="tool" aria-label="Shadow style"><svg class="px" width="32" height="32"><path fill="url(#chk-k)" d="M6 6h22v22H6z"/><path fill="#4ba5a5" stroke="#4d4d4d" stroke-width="2" d="M3 3h20v20H3z"/></svg></button>
  <button class="tool" aria-label="3-D style"><svg class="px" width="32" height="32"><path fill="url(#chk-g)" stroke="#4d4d4d" stroke-width="2" d="M1 11l9-10h20l-9 10z"/><path fill="#ddd" stroke="#a0a0a0" stroke-width="2" d="M22 11l9-10v20l-9 10z"/><path fill="#4ba5a5" d="M1 11h21v20H1z"/><path fill="none" stroke="#4d4d4d" stroke-width="2" d="M22 11H1v20h20"/></svg></button>
  <button class="drop align-items-end pb-1" aria-label="Drawing toolbar options"><svg class="px mb-1" width="13" height="7"><use href="#dn"/></svg></button>
 </div>
</div>

<footer class="status d-flex flex-shrink-0">
 <div class="pane pane-page"><span class="c76">Page&nbsp; 1</span><span class="c84">Sec 1</span><span>1/2</span></div>
 <div class="pane pane-at"><span class="c72">At&nbsp; 2cm</span><span class="c48">Ln&nbsp; 1</span><span>Col&nbsp;1</span></div>
 <div class="pane pane-flag">REC</div><div class="pane pane-flag">TRK</div><div class="pane pane-flag">EXT</div><div class="pane pane-flag">OVR</div>
 <div class="pane pane-lang">English (U.K.</div>
 <div class="pane pane-book"><svg class="px ms-1" width="18" height="14"><path fill="#fff" stroke="#000" d="M.5 2.500h4l4 1 4-1h4v9h-4l-4 1-4-1h-4z"/><path stroke="#000" d="M8.500 3v9M1 13.500h15M11 5.500h3M11 7.500h3M11 9.500h3M17.500 4v9"/><path fill="#ee0" d="M5 3h2v3H6v3H4V6h1z"/><path stroke="#000" d="M7.500 0v4M3.500 9v2"/></svg></div>
 <div class="pane pane-a"></div><div class="pane pane-b"></div>
</footer>

<div class="taskbar flex-shrink-0">
 <div></div>
 <div class="dock d-flex">
  <button class="app start" aria-label="Start"><svg width="36" height="36"><defs><linearGradient id="wg" x1="0" y1="0" x2="36" y2="36" gradientUnits="userSpaceOnUse"><stop stop-color="#8adcff"/><stop offset="1" stop-color="#0d9bff"/></linearGradient></defs><path fill="url(#wg)" d="M2 1h15v16H1V2zM18 1h16l1 1v15H18zM1 18h16v17H2l-1-1zM18 18h17v16l-1 1H18z"/></svg></button>
  <button class="app" aria-label="File Explorer"><svg width="36" height="36"><defs><linearGradient id="fg" x2="1" y2="1"><stop stop-color="#ffdf70"/><stop offset="1" stop-color="#fbb818"/></linearGradient></defs><path fill="#e0a106" d="M0 12V3l2-2h9l4 4h18v7z"/><path fill="url(#fg)" d="M0 7h11l4-3h19l2 2v26l-2 2H2l-2-2z"/><path fill="#1277c9" d="M6 34V26q0-3 3-3h18q3 0 3 3v8z"/><path stroke="#0a4a86" stroke-width="2" stroke-linecap="round" d="M12 28.500h12"/></svg></button>
  <button class="app" aria-label="Mail"><svg width="36" height="36"><path fill="#0a5cad" d="M0 11L18 0l18 11v8H0z"/><path fill="#f2f2f2" d="M3 10h30v9L18 25z"/><path fill="#33b7ee" d="M36 11v22H2z"/><path fill="#1b8fdc" d="M0 11l36 22H0z"/><path fill="#3cc0f2" d="M36 11v22L17 22z"/></svg><span class="count">3</span></button>
  <button class="app" aria-label="Chrome"><svg width="34" height="34" viewBox="-17 -17 34 34"><circle r="17" fill="#fbc116"/><path fill="#e33b2e" d="M0 0L-14.700 -8.500A17 17 0 0 1 14.700 -8.500z"/><path fill="#e33b2e" d="M0-8.500h14.700L0 0z"/><path fill="#2a9548" d="M-14.700-8.500A17 17 0 0 0 0 17l7.400-12.700L0 0l-7.400 4.200z"/><circle r="8.500" fill="#fff"/><circle r="6.700" fill="#3780f0"/></svg></button>
  <button class="app" aria-label="VPN"><svg width="32" height="32"><defs><linearGradient id="ng" x2="0" y2="1"><stop stop-color="#3a8fd6"/><stop offset="1" stop-color="#1c4486"/></linearGradient></defs><circle cx="16" cy="16" r="16" fill="url(#ng)"/><path fill="#e6eff8" d="M6 22A12 12 0 1 1 26 22l-5-8-2 2-3-5-4 6-2-2z"/><path fill="#3a70ad" d="M5 22l5-7 2 2 4-6 3 5 2-2 6 8-4 3H9z" opacity=".6"/></svg></button>
  <button class="app active" aria-label="Word"><svg class="px" width="30" height="30"><path fill="#fff" stroke="#000080" stroke-width="3" d="M1.500 1.500h27v27h-27z"/><path fill="#000080" d="M5 7h9v2h-2v7l4-9h4v9l3-7h-2V7h6v2h-1l-6 14h-4v-9l-4 9H8V9H5z"/></svg></button>
 </div>
 <div class="d-flex align-items-center justify-content-end">
  <button class="trayicon" aria-label="Show hidden icons"><svg width="18" height="11" fill="none" stroke="#fff" stroke-width="1.500"><path d="M1 10l8-8 8 8"/></svg></button>
  <button class="trayicon" aria-label="OneDrive"><svg width="24" height="22"><path fill="#8b8b8b" d="M4 8a6 6 0 0 1 11-4 5 5 0 0 1 5 6v8H8z"/><path fill="#dcdcdc" d="M5 17a5 5 0 0 1 0-9 6 6 0 0 1 9 2v7z"/><rect x="12" y="9" width="12" height="12" rx="3" fill="#d3222a"/><path stroke="#fff" stroke-width="2.500" d="M15 12l6 6M21 12l-6 6"/></svg></button>
  <button class="trayicon me-1" aria-label="Dropbox"><svg width="22" height="20" fill="#fff"><path d="M6 0l5 3.500L6 7 0 3.500zM16 0l6 3.500L16 7l-5-3.500zM6 7.500l5 3.500-5 3.500L0 11zM16 7.500l6 3.500-6 3.500-5-3.500zM11 13l5 3.500-5 3.500-5-3.500z"/></svg></button>
  <button class="trayicon" aria-label="Network"><svg width="24" height="25" fill="none" stroke="#fff" stroke-width="2"><path d="M15 3H3q-2 0-2 2v12q0 2 2 2h14M7 19v4M13 19v4M4 23.500h14M17 1h6v7l-2 2h-2l-2-2zM20 10v14M17 5h6"/></svg></button>
  <button class="trayicon" aria-label="Volume"><svg width="24" height="22" fill="none" stroke="#fff" stroke-width="1.700"><path d="M1 8h4l6-5v16l-6-5H1z"/><path d="M14 8q2 3 0 6M17 5q4 6 0 12"/><path stroke="#666" d="M20 3q6 8 0 16"/></svg></button>
  <button class="trayicon me-1" aria-label="Battery"><svg width="24" height="20"><path fill="none" stroke="#fff" stroke-width="2" d="M10 3h8q3 0 3 3v9q0 3-3 3H7v-7"/><path fill="#fff" d="M0 4h9v3q0 3-3 4H3Q0 10 0 7zM1 0h2v4H1zM6 0h2v4H6zM11 5h6q2 0 2 2v7q0 2-2 2H9v-4q2-2 2-5zM22 8h2v5h-2z"/></svg></button>
  <div class="clock ms-3"><span>17:46</span><span>11/08/2022</span></div>
  <div class="count" style="margin:0 29px 0 12px">3</div>
 </div>
</div>

<script>
// Blank log rows; the insertion point sits in the sixth one.
document.getElementById('rows').innerHTML = Array.from({length: 30}, (_, r) =>
  '<tr>' + Array.from({length: 5}, (_, c) => '<td>' + (r === 5 && c === 1 ? '<span class="caret"></span>' : '') + '</td>').join('') + '</tr>').join('');

// Rulers: one centimetre at the current zoom, numbered outwards from the margin.
const CM = 51.2;
let h = '<path fill="#a0a0a0" d="M2 5h100v13H2zM1420 5h100v13H1420z"/><path fill="#fff" d="M102 5h1318v13H102z"/>';
for (let q = -8; q <= 110; q++) {
  const x = Math.round(102 + q * CM / 4);
  if (q === 0 || q === 103) continue;
  if (q % 4 === 0) h += `<text x="${x}" y="15">${Math.abs(q / 4)}</text>`;
  else if (q % 2 === 0) h += `<rect x="${x}" y="9" width="1" height="5"/>`;
  else h += `<rect x="${x}" y="11" width="1" height="2"/>`;
}
for (let x = 167; x < 1420; x += 65) h += `<rect x="${x}" y="19" width="1" height="3" fill="#a0a0a0"/>`;
h += '<g fill="#f0f0f0" stroke="#696969"><path d="M98.500 2.500h8v3l-4 4.500-4-4.500zM98.500 17.500v-3l4-4.500 4 4.500v3zM98.500 17.500h8v5h-8zM1414.500 17.500v-3l4-4 4 4v3z"/></g>';
document.getElementById('hruler').innerHTML = h;

let v = '<path fill="#fff" d="M4 6h15v802H4z"/><path fill="#a0a0a0" d="M5 4h14v2H5z"/>';
for (let q = 1; q <= 62; q++) {
  const y = Math.round(4 + q * CM / 4);
  if (q % 4 === 0) v += `<text transform="translate(15 ${y}) rotate(-90)">${q / 4}</text>`;
  else if (q % 2 === 0) v += `<rect x="9" y="${y}" width="5" height="1"/>`;
  else v += `<rect x="10" y="${y}" width="2" height="1"/>`;
}
document.getElementById('vruler').innerHTML = v;
</script>
<script src="https://cdn.jsdelivr.net/npm/bootstrap@5.3.0/dist/js/bootstrap.bundle.min.js"></script>
</body>
</html>
